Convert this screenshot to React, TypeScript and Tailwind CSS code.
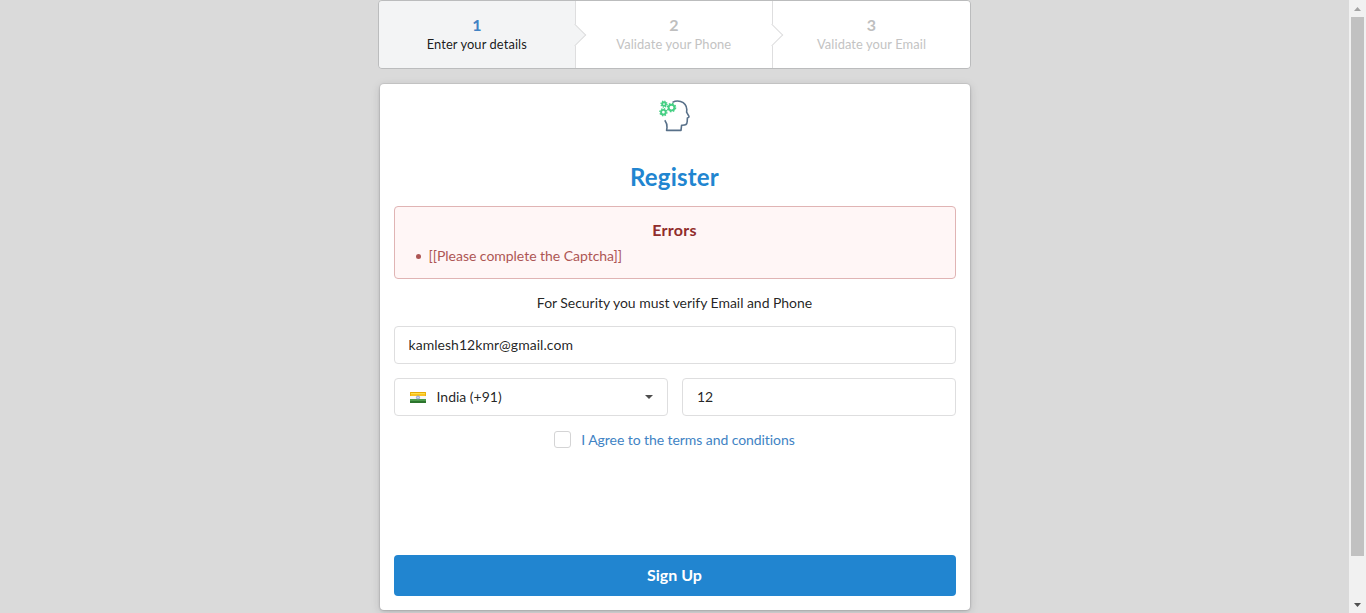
import React from "react";

const steps = [
  { n: "1", label: "Enter your details", active: true },
  { n: "2", label: "Validate your Phone", active: false },
  { n: "3", label: "Validate your Email", active: false },
];

function Step({ n, label, active, last }: { n: string; label: string; active: boolean; last: boolean }) {
  return (
    <div
      className={`relative flex flex-col items-center justify-center ${
        active ? "bg-[#f3f4f5]" : "bg-white"
      } ${last ? "flex-1 rounded-r-[3px]" : "w-[197px] border-r border-[#dededf]"} ${n === "1" ? "rounded-l-[3px]" : ""}`}
    >
      <div className={`text-[16px] leading-[18px] font-bold ${active ? "text-[#4183c4]" : "text-[#bfbfbf]"}`}>{n}</div>
      <div
        className={`mt-[2px] mb-px text-[12.88px] leading-[16px] tracking-[0.1px] ${
          active ? "text-black/90" : "text-[#c3c3c3]"
        }`}
      >
        {label}
      </div>
      {!last && (
        <span
          className={`absolute top-[26px] -right-[8px] z-10 size-4 -rotate-45 border-r border-b border-[#dededf] ${
            active ? "bg-[#f3f4f5]" : "bg-white"
          }`}
        />
      )}
    </div>
  );
}

function Gear({ x, y, r }: { x: number; y: number; r: number }) {
  const tooth = ((r + 1.2) * Math.PI) / 8;
  return (
    <g transform={`translate(${x} ${y})`} stroke="#45cf83" fill="none">
      <circle r={r} strokeWidth="1.9" />
      <circle r={r + 1.2} strokeWidth="1.4" strokeDasharray={`${tooth} ${tooth}`} />
    </g>
  );
}

function Logo() {
  return (
    <svg width="34" height="34" viewBox="0 0 34 34" fill="none">
      <path
        d="M14.5 3.4C17 2 20 1.7 22.6 2.5C26.4 3.7 28.6 6.5 28.8 10.5L28.6 13.2L31 17.4C31.2 18.2 30.8 18.5 29.4 18.9L29.2 22.5C29 25.5 28 26.3 23.6 26.2L23 31.4H8.6L9 28.5C9.2 25.8 8.4 23.4 6.8 21.2"
        stroke="#587089"
        strokeWidth="1.6"
        strokeLinejoin="round"
      />
      <Gear x={6} y={5.1} r={1.8} />
      <Gear x={13.5} y={8.6} r={2.9} />
      <Gear x={5.4} y={13.2} r={2.3} />
    </svg>
  );
}

function Flag() {
  return (
    <svg width="16" height="11" viewBox="0 0 16 11">
      <path d="M0 0h16v4H0z" fill="#fbc321" />
      <path d="M0 0h16v1H0z" fill="#e5a906" />
      <path d="M1 1h14v1H1z" fill="#fde04a" />
      <path d="M0 4h16v3H0z" fill="#f7f7f5" />
      <path d="M0 7h16v4H0z" fill="#4b9a4b" />
      <path d="M0 9h16v2H0z" fill="#2c742d" />
      <path d="M0 0h1v4H0zM15 0h1v4h-1z" fill="#edb20a" />
      <circle cx="8" cy="5.5" r="1.6" fill="#c9d3ea" stroke="#8194c6" strokeWidth="0.8" />
    </svg>
  );
}

export default function App() {
  return (
    <div className="flex h-[613px] overflow-hidden bg-[#dadada] font-['Lato',sans-serif] text-[14px] text-black/87 [font-variant-ligatures:none]">
      <main className="flex flex-1 flex-col items-center">
        <div className="flex h-[69px] w-[593.4px] shrink-0 rounded-[4px] border border-[#bbbcbd]">
          {steps.map((s, i) => (
            <Step key={s.n} {...s} last={i === steps.length - 1} />
          ))}
        </div>

        <section className="mt-[15px] flex h-[526px] w-[590px] shrink-0 flex-col items-center rounded-[4px] bg-white px-[14px] shadow-[0_0_0_1px_rgba(34,36,38,0.06),0_1px_3px_0_rgba(34,36,38,0.15),0_2px_10px_0_rgba(34,36,38,0.15)]">
          <div className="mt-[15px] h-[34px]">
            <Logo />
          </div>
          <h1 className="mt-[28px] text-[24px] leading-[31px] font-bold tracking-[0.2px] text-[#2185d0]">Register</h1>

          <div className="mt-[14px] h-[73px] w-[562px] rounded-[4px] border border-[#e0b4b4] bg-[#fff6f6]">
            <div className="mt-[13px] text-center text-[16px] leading-[20px] font-bold tracking-[0.3px] text-[#912d2b]">
              Errors
            </div>
            <ul className="mt-[7px] flex items-center pl-[21px] leading-[18px] text-[#9f3a38] opacity-85">
              <li className="flex items-center">
                <span className="mr-[8px] size-[5px] rounded-full bg-[#9f3a38]" />
                <span className="tracking-[-0.03px]">[[Please complete the Captcha]]</span>
              </li>
            </ul>
          </div>

          <p className="mt-[14px] leading-[20px] tracking-[-0.04px]">For Security you must verify Email and Phone</p>

          <div className="mt-[13px] flex h-[38px] w-[562px] items-center rounded-[4px] border border-[#dededf] px-[14px] pb-[2px] tracking-[0.04px]">
            kamlesh12kmr@gmail.com
          </div>

          <div className="mt-[14px] flex w-[562px] gap-[14px]">
            <div className="flex h-[38px] flex-1 items-center rounded-[4px] border border-[#dededf] pr-[14px] pl-[15px]">
              <Flag />
              <span className="ml-[11px] flex-1 pb-[2px]">India (+91)</span>
              <svg width="8" height="4" viewBox="0 0 8 4">
                <path d="M0 0h8L4 4z" fill="#4d4d4d" />
              </svg>
            </div>
            <div className="flex h-[38px] flex-1 items-center rounded-[4px] border border-[#dededf] px-[14px] pb-[2px]">12</div>
          </div>

          <div className="mt-[15px] flex h-[17px] items-center">
            <span className="size-[17px] rounded-[3px] border border-[#d4d4d5] bg-white" />
            <span className="ml-[10px] tracking-[-0.07px] text-[#4183c4]">I Agree to the terms and conditions</span>
          </div>

          <button className="mt-[107px] h-[41px] w-[562px] rounded-[4px] bg-[#2185d0] pb-[2px] text-[16px] leading-[16px] font-bold text-white">
            Sign Up
          </button>
        </section>
      </main>

      <aside className="flex w-[17px] shrink-0 flex-col items-center bg-[#f1f1f1]">
        <div className="flex h-[17px] items-center justify-center">
          <svg width="7" height="4" viewBox="0 0 7 4">
            <path d="M3.5 0L7 4H0z" fill="#a3a3a3" />
          </svg>
        </div>
        <div className="h-[539px] w-[13px] bg-[#c1c1c1]" />
        <div className="mt-auto flex h-[17px] items-center justify-center">
          <svg width="7" height="4" viewBox="0 0 7 4">
            <path d="M0 0h7L3.5 4z" fill="#505050" />
          </svg>
        </div>
      </aside>
    </div>
  );
}
